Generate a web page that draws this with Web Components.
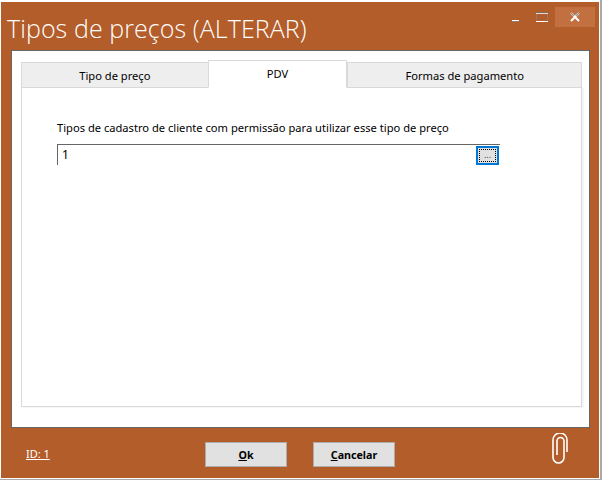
<!DOCTYPE html>
<html><head><meta charset="utf-8"><style>
html,body{margin:0;padding:0;width:602px;height:480px;overflow:hidden;background:#fff}
body{font-family:"Noto Sans","Open Sans",sans-serif}
</style></head><body>
<template id="t-window"><style>
:host{display:flex;flex-direction:column;width:602px;height:480px;box-sizing:border-box;border-right:2px solid #a9a9a9;border-bottom:1px solid #a9a9a9;}
.frame{flex:1;display:flex;flex-direction:column;background:#b35d2a;border:1px solid #fff;border-top-width:2px;min-height:0}
.head{height:48px;display:flex;justify-content:space-between;flex:none;padding-left:6px}
h1{margin:0;font:300 25px/1 "Open Sans",sans-serif;letter-spacing:.08px;color:#fff;padding-top:14px;white-space:nowrap}
.body{flex:1;margin:0 9px 0 10px;background:#fff;border:1px solid #666;min-height:0;display:flex;padding:9px 7px 20px 9px}
.foot{height:50px;box-sizing:border-box;flex:none;display:grid;grid-template-columns:1fr auto auto 1fr;align-items:start;column-gap:26px;padding-top:14px;color:#fff}
</style><div class="frame"><div class="head"><h1><slot name="title"></slot></h1><slot name="controls"></slot></div>
<div class="body"><slot></slot></div><div class="foot"><slot name="foot"></slot></div></div></template>

<template id="t-controls"><style>
:host{display:flex;align-items:flex-start;padding-top:5px;padding-right:4px}
.b{height:20px;display:flex;align-items:center;justify-content:center}
.x{width:40px;background:#c2703f}
</style>
<div class="b" style="width:26px"><svg width="9" height="10"><path d="M1 8.500h7" stroke="#fff" stroke-width="1"/><path d="M1 9.500h7" stroke="#8f7f75" stroke-width="1"/></svg></div>
<div class="b" style="width:27px"><svg width="12" height="11"><path d="M.5 1v9M11.500 1v9" stroke="#8c7a70" fill="none"/><path d="M0 .5h12" stroke="#7d6a60"/><path d="M0 1.500h12" stroke="#e8d8d0"/><path d="M0 9.500h12" stroke="#fff"/></svg></div>
<div class="b x"><svg width="10" height="10"><path d="M1 1l8 8M9 1l-8 8" stroke="#fff" stroke-width="2"/><path d="M1 1l3 3M9 1L6 4" stroke="#8b8684" stroke-width="1.2"/></svg></div>
</template>

<template id="t-tabs"><style>
:host{display:flex;flex-direction:column;flex:1;min-width:0}
.bar{display:flex;align-items:flex-end;height:27px;flex:none;position:relative;z-index:1}
.panel{flex:1;border:1px solid #d9d9d9;box-sizing:border-box;background:#fff;padding:32px 35px;box-shadow:2px 1px 0 #f6f6f6}
</style><div class="bar"><slot name="tab"></slot></div><div class="panel"><slot></slot></div></template>

<template id="t-tab"><style>
:host{display:flex;align-items:center;justify-content:center;box-sizing:border-box;height:26px;background:#eee;border:1px solid #d9d9d9;font-size:11.15px;color:#000;margin-bottom:-1px}
:host([active]){height:28px;background:#fff;border-bottom-color:#fff;padding-bottom:2px;position:relative}
</style><slot></slot></template>

<template id="t-lookup"><style>
:host{display:block;font-size:11.15px;color:#000}
.f{margin-top:9px;height:21px;width:443px;border-top:1px solid #666;border-left:1px solid #666;box-sizing:border-box;display:flex;justify-content:space-between;position:relative;font-size:12px;line-height:19px;padding-left:4px}
.btn{position:absolute;right:1px;top:1px;width:23px;height:19px;box-sizing:border-box;border:2px solid #0078d7;background:#e1e1e1;padding:1px}
.in{height:100%;box-sizing:border-box;border:1px dotted #000;font-size:9px;line-height:10px;text-align:center;color:#444}
</style><div><slot></slot></div><div class="f"><slot name="value"></slot><div class="btn"><div class="in">...</div></div></div></template>

<template id="t-button"><style>
:host{display:flex;align-items:center;justify-content:center;width:82px;height:25px;box-sizing:border-box;background:#e1e1e1;border:1px solid #adadad;font-size:10.7px;font-weight:700;color:#000}
</style><slot></slot></template>

<template id="t-foot"><style>:host{display:block;font-size:11px;color:#fff;text-decoration:underline;padding-top:4px;margin-left:25px}</style><slot></slot></template>

<x-window>
<span slot="title">Tipos de preços (ALTERAR)</span>
<x-controls slot="controls"></x-controls>
<x-tabs>
<x-tab slot="tab" style="width:188px">Tipo de preço</x-tab>
<x-tab slot="tab" active style="width:140px;margin-left:-1px">PDV</x-tab>
<x-tab slot="tab" style="width:235px">Formas de pagamento</x-tab>
<x-lookup>Tipos de cadastro de cliente com permissão para utilizar esse tipo de preço<span slot="value">1</span></x-lookup>
</x-tabs>
<x-foot slot="foot">ID: 1</x-foot>
<x-button slot="foot"><span><u>O</u>k</span></x-button>
<x-button slot="foot"><span><u>C</u>ancelar</span></x-button>
<svg slot="foot" style="justify-self:end;margin:-9px 31px 0 0" width="16" height="31" viewBox="0 0 16 31" fill="none" stroke="#fff" stroke-width="1.6"><path d="M15 19V7A7 7 0 0 0 1 7V24.500A5.500 5.500 0 0 0 12 24.500V8A3.500 3.500 0 0 0 5 8V22"/></svg>
</x-window>
<script>
for(const [n,t] of [['x-window','t-window'],['x-controls','t-controls'],['x-tabs','t-tabs'],['x-tab','t-tab'],['x-lookup','t-lookup'],['x-button','t-button'],['x-foot','t-foot']]){
customElements.define(n,class extends HTMLElement{constructor(){super();this.attachShadow({mode:'open'}).append(document.getElementById(t).content.cloneNode(true))}});
}
</script>
</body></html>
